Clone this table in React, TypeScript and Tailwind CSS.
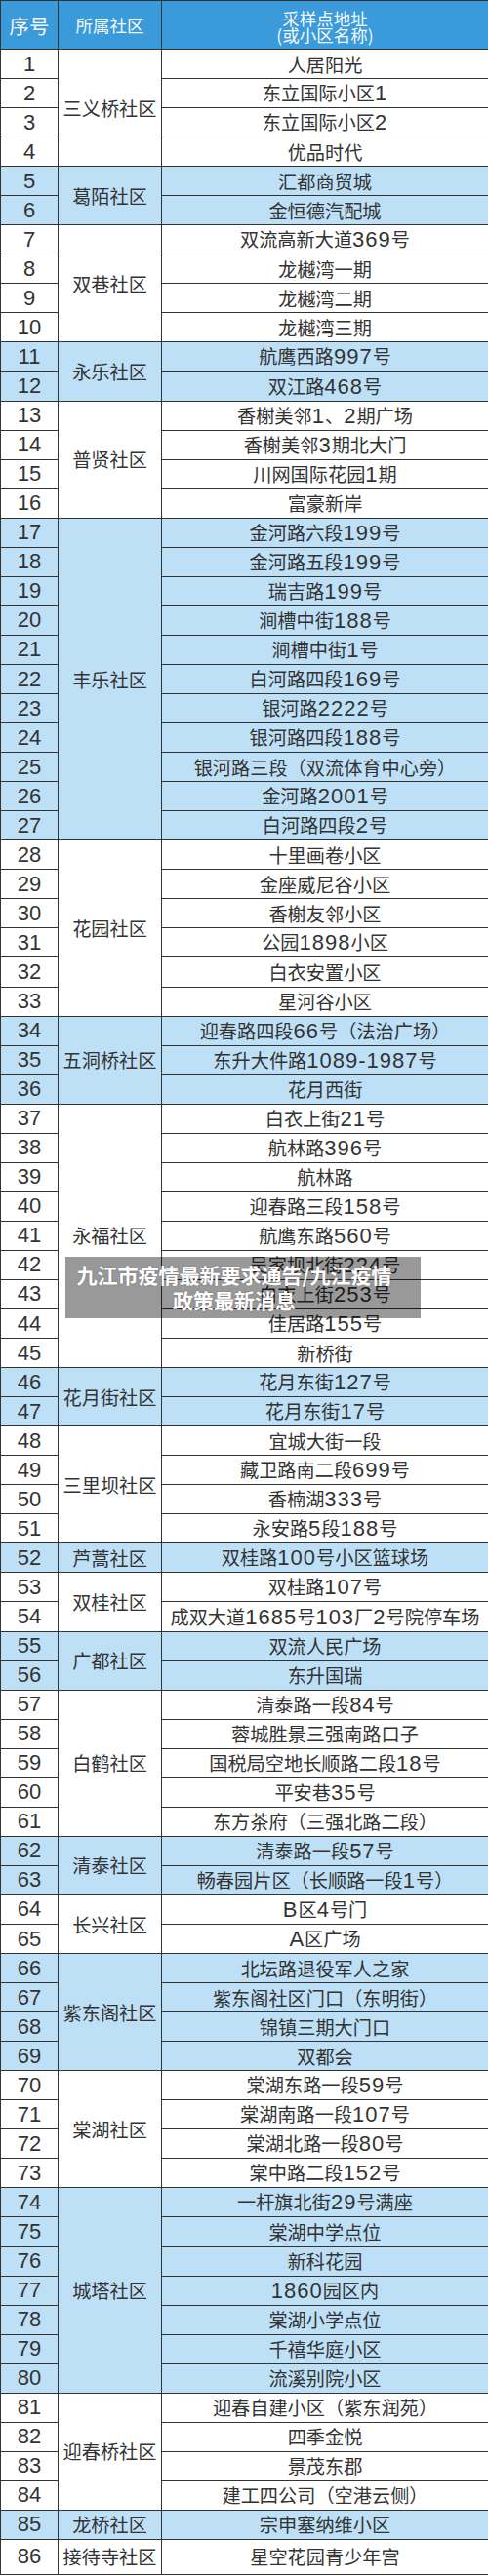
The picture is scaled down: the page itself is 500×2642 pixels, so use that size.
import React from "react";

const groups: [string, string[]][] = [
  ["三义桥社区", ["人居阳光", "东立国际小区1", "东立国际小区2", "优品时代"]],
  ["葛陌社区", ["汇都商贸城", "金恒德汽配城"]],
  ["双巷社区", ["双流高新大道369号", "龙樾湾一期", "龙樾湾二期", "龙樾湾三期"]],
  ["永乐社区", ["航鹰西路997号", "双江路468号"]],
  ["普贤社区", ["香榭美邻1、2期广场", "香榭美邻3期北大门", "川网国际花园1期", "富豪新岸"]],
  [
    "丰乐社区",
    [
      "金河路六段199号",
      "金河路五段199号",
      "瑞吉路199号",
      "涧槽中街188号",
      "涧槽中街1号",
      "白河路四段169号",
      "银河路2222号",
      "银河路四段188号",
      "银河路三段（双流体育中心旁）",
      "金河路2001号",
      "白河路四段2号",
    ],
  ],
  ["花园社区", ["十里画卷小区", "金座威尼谷小区", "香榭友邻小区", "公园1898小区", "白衣安置小区", "星河谷小区"]],
  ["五洞桥社区", ["迎春路四段66号（法治广场）", "东升大件路1089-1987号", "花月西街"]],
  [
    "永福社区",
    [
      "白衣上街21号",
      "航林路396号",
      "航林路",
      "迎春路三段158号",
      "航鹰东路560号",
      "吴家坝北街224号",
      "白衣上街253号",
      "佳居路155号",
      "新桥街",
    ],
  ],
  ["花月街社区", ["花月东街127号", "花月东街17号"]],
  ["三里坝社区", ["宜城大街一段", "藏卫路南二段699号", "香楠湖333号", "永安路5段188号"]],
  ["芦蒿社区", ["双桂路100号小区篮球场"]],
  ["双桂社区", ["双桂路107号", "成双大道1685号103厂2号院停车场"]],
  ["广都社区", ["双流人民广场", "东升国瑞"]],
  [
    "白鹤社区",
    ["清泰路一段84号", "蓉城胜景三强南路口子", "国税局空地长顺路二段18号", "平安巷35号", "东方茶府（三强北路二段）"],
  ],
  ["清泰社区", ["清泰路一段57号", "畅春园片区（长顺路一段1号）"]],
  ["长兴社区", ["B区4号门", "A区广场"]],
  ["紫东阁社区", ["北坛路退役军人之家", "紫东阁社区门口（东明街）", "锦镇三期大门口", "双都会"]],
  ["棠湖社区", ["棠湖东路一段59号", "棠湖南路一段107号", "棠湖北路一段80号", "棠中路二段152号"]],
  [
    "城塔社区",
    ["一杆旗北街29号满座", "棠湖中学点位", "新科花园", "1860园区内", "棠湖小学点位", "千禧华庭小区", "流溪别院小区"],
  ],
  ["迎春桥社区", ["迎春自建小区（紫东润苑）", "四季金悦", "景茂东郡", "建工四公司（空港云侧）"]],
  ["龙桥社区", ["宗申塞纳维小区"]],
  ["接待寺社区", ["星空花园青少年宫"]],
];

function Addr({ text }: { text: string }) {
  const parts = text.split(/([0-9A-Za-z\-]+)/);
  return (
    <>
      {parts.map((p, i) =>
        i % 2 === 1 ? (
          <span key={i} className="font-['Liberation_Sans',sans-serif] text-[22px] tracking-[1px]">
            {p}
          </span>
        ) : (
          <span key={i}>{p}</span>
        )
      )}
    </>
  );
}

export default function App() {
  const cells: React.ReactNode[] = [];
  let row = 2;
  let n = 1;
  groups.forEach(([name, addrs], gi) => {
    const bg = gi % 2 === 1 ? "bg-[#bde0f7]" : "bg-white";
    cells.push(
      <div
        key={`c${gi}`}
        className={`${bg} flex items-center justify-center border-r border-b border-[#333] text-[19.2px] leading-[24px] text-[#333]`}
        style={{ gridColumn: 2, gridRow: `${row} / span ${addrs.length}` }}
      >
        {name}
      </div>
    );
    addrs.forEach((a, ai) => {
      const r = row + ai;
      cells.push(
        <div
          key={`n${n}`}
          className={`${bg} flex items-center justify-center border-l border-r border-b border-[#333] font-['Liberation_Sans','Noto_Sans_CJK_SC',sans-serif] text-[22px] leading-[24px] text-[#333]`}
          style={{ gridColumn: 1, gridRow: r }}
        >
          {n}
        </div>
      );
      cells.push(
        <div
          key={`a${n}`}
          className={`${bg} flex items-center justify-center whitespace-nowrap border-b border-[#333] text-[19.2px] leading-[24px] text-[#333]`}
          style={{ gridColumn: 3, gridRow: r }}
        >
          <span>
            <Addr text={a} />
          </span>
        </div>
      );
      n++;
    });
    row += addrs.length;
  });

  return (
    <div className="relative w-[500px] bg-white font-['Noto_Sans_CJK_SC',sans-serif]">
      <div className="grid grid-cols-[60px_106px_334px] grid-rows-[51px_repeat(85,30.05px)_36px]">
        <div className="col-start-1 row-start-1 flex items-center justify-center border-t border-l border-r border-b border-[#333] bg-[#3b9ad9] text-[20.5px] leading-[24px] text-[#f4f9fd]">
          序号
        </div>
        <div className="col-start-2 row-start-1 flex items-center justify-center border-t border-r border-b border-[#333] bg-[#3b9ad9] text-[17.5px] leading-[20px] text-[#f4f9fd]">
          所属社区
        </div>
        <div className="col-start-3 row-start-1 flex flex-col items-center justify-center border-t border-b border-[#333] bg-[#3b9ad9] pt-[3px] text-[17.5px] leading-[17px] text-[#f4f9fd]">
          <span>采样点地址</span>
          <span>(或小区名称)</span>
        </div>
        {cells}
      </div>
      <div className="absolute left-[67px] top-[1289px] h-[63px] w-[364px] bg-[rgba(0,0,0,0.4)] pl-[11px] pr-[29px] pt-[5px] text-center text-[21px] font-bold leading-[26px] text-white [text-shadow:0_0_2px_rgba(0,0,0,0.25)]">
        九江市疫情最新要求通告/九江疫情
        <br />
        政策最新消息
      </div>
    </div>
  );
}
